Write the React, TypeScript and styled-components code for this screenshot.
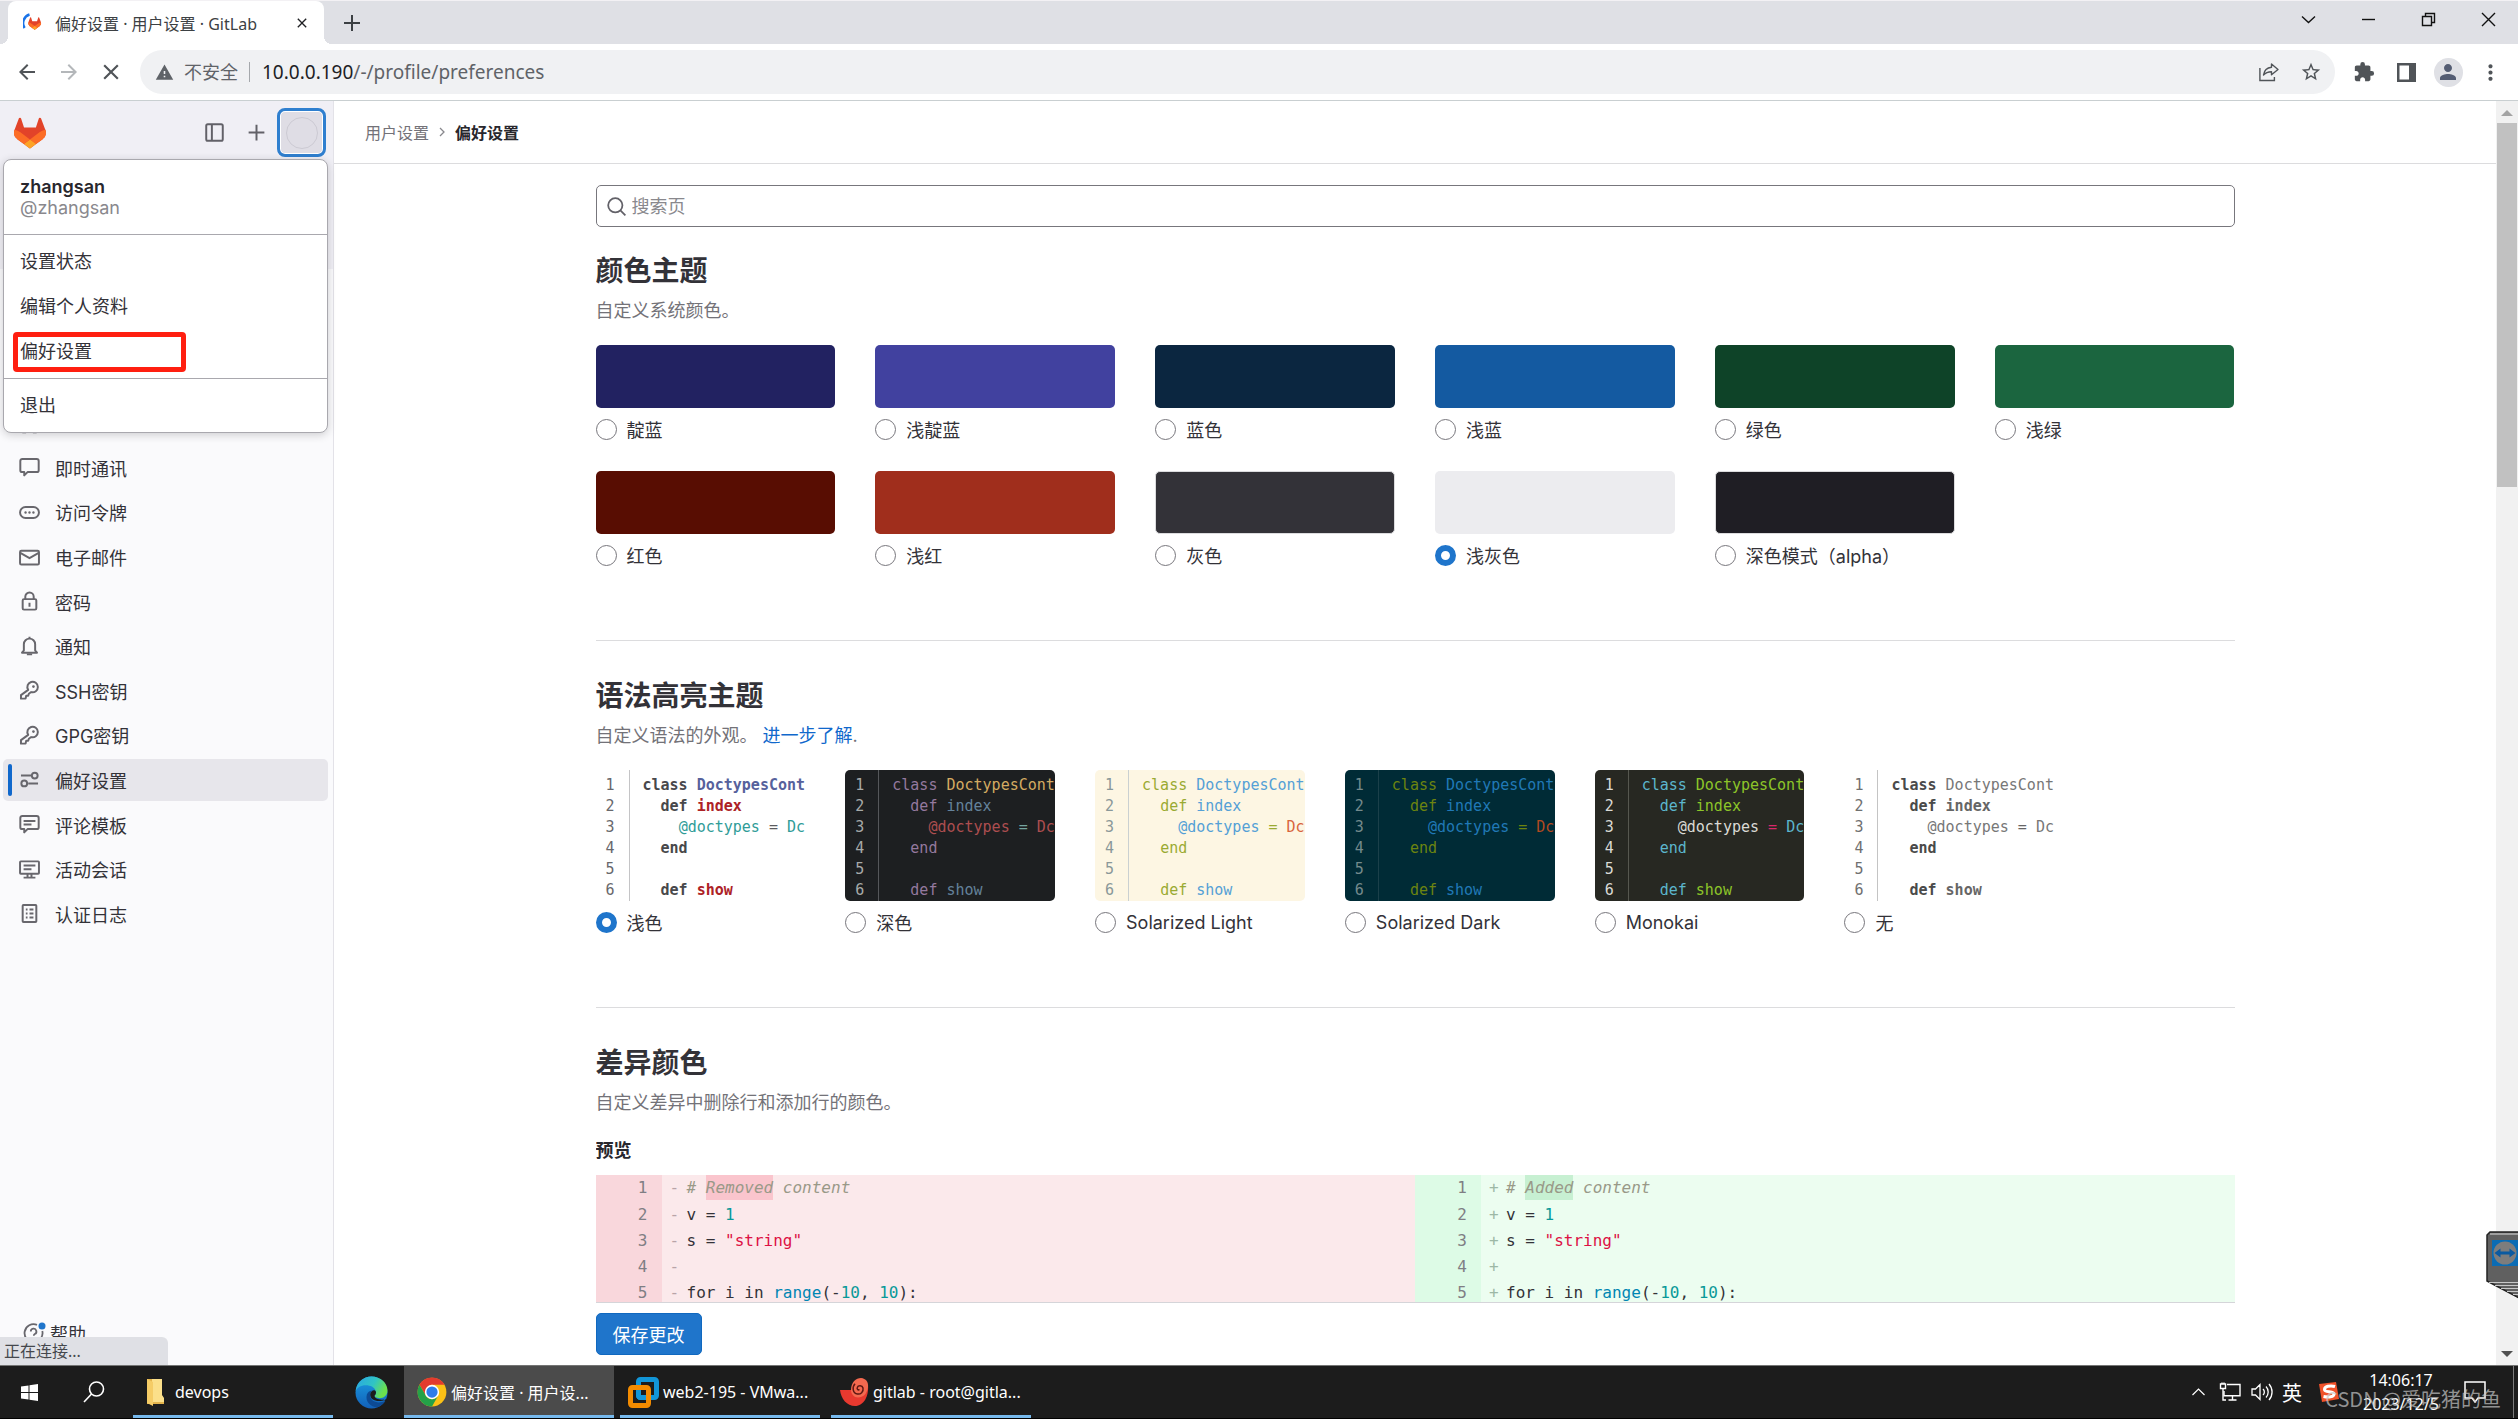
import React from "react";
import styled, { createGlobalStyle, css } from "styled-components";
import {
  MdArrowBack,
  MdArrowForward,
  MdClose,
  MdExtension,
  MdMoreVert,
  MdPerson,
  MdStarBorder,
  MdWarning,
} from "react-icons/md";

const uiFont = `"Noto Sans", "Noto Sans CJK SC", sans-serif`;
const pageFont = `Inter, "Noto Sans CJK SC", sans-serif`;
const codeFont = `"DejaVu Sans Mono", "Noto Sans CJK SC", monospace`;

const GlobalStyle = createGlobalStyle`
  *, *::before, *::after { box-sizing: border-box; }
  html, body { margin: 0; padding: 0; }
  body { background: #fff; font-family: ${pageFont}; color: #333238; overflow: hidden; }
  button { font: inherit; color: inherit; background: none; border: 0; padding: 0; }
  h1, h2, p, ul, ol { margin: 0; padding: 0; }
  ul, ol { list-style: none; }
  a { color: inherit; text-decoration: none; }
  svg { display: block; flex: none; }
`;

const Desktop = styled.div`
  height: 100vh;
  display: flex;
  flex-direction: column;
  position: relative;
`;

/* ---------- Browser frame ---------- */

const TabStrip = styled.header`
  display: flex;
  height: 44px;
  padding-left: 8px;
  background: #dfe0e5;
  border-top: 1px solid #f3f1f4;
  font-family: ${uiFont};
`;

const Tab = styled.div`
  position: relative;
  display: flex;
  align-items: center;
  width: 316px;
  padding: 0 14px 0 15px;
  background: #fff;
  border-radius: 8px 8px 0 0;
  font-size: 16px;
  color: #3c4043;
  &::before,
  &::after {
    content: "";
    position: absolute;
    bottom: 0;
    width: 8px;
    height: 8px;
  }
  &::before {
    left: -8px;
    background: radial-gradient(circle at 0 0, transparent 8px, #fff 8px);
  }
  &::after {
    right: -8px;
    background: radial-gradient(circle at 100% 0, transparent 8px, #fff 8px);
  }
`;

const TabTitle = styled.span`
  flex: 1;
  margin-left: 13px;
  white-space: nowrap;
`;

const StripButton = styled.button<{ $width: number }>`
  display: grid;
  place-items: center;
  width: ${(p) => p.$width}px;
  color: #202124;
`;

const WindowControls = styled.div`
  display: flex;
  margin-left: auto;
  height: 37px;
`;

const Toolbar = styled.div`
  display: flex;
  align-items: center;
  height: 57px;
  padding: 0 7px 0 6px;
  background: #fff;
  border-bottom: 1px solid #c9cfd1;
  font-family: ${uiFont};
`;

const ToolButton = styled.button<{ $muted?: boolean }>`
  display: grid;
  place-items: center;
  width: 42px;
  height: 42px;
  color: ${(p) => (p.$muted ? "#b4b7ba" : "#505458")};
`;

const Omnibox = styled.div`
  flex: 1;
  display: flex;
  align-items: center;
  height: 44px;
  margin: 0 8px;
  padding: 0 3px 0 15px;
  border-radius: 22px;
  background: #f0f1f3;
  color: #5f6368;
  font-size: 18px;
`;

const Security = styled.span`
  margin-left: 10px;
  padding-right: 11px;
  border-right: 1px solid #a5a8ac;
  line-height: 20px;
`;

const Address = styled.div`
  flex: 1;
  margin-left: 12px;
  font-size: 19px;
  b {
    font-weight: 400;
    color: #202124;
  }
`;

const ProfileChip = styled.span`
  display: grid;
  place-items: center;
  width: 29px;
  height: 29px;
  border-radius: 50%;
  background: #dfe0e5;
  color: #545d73;
`;

/* ---------- Page shell ---------- */

const Viewport = styled.div`
  flex: 1;
  min-height: 0;
  display: flex;
  position: relative;
`;

const Sidebar = styled.aside`
  position: relative;
  display: flex;
  flex-direction: column;
  width: 334px;
  background: #fafafc;
  border-right: 1px solid #e3e2e8;
`;

const SidebarTop = styled.div`
  display: flex;
  align-items: flex-start;
  height: 168px;
  padding: 7px 7px 0 14px;
  background: #f0eff5;
`;

const LogoLink = styled.a`
  margin: 9px auto 0 0;
`;

const TopButton = styled.button`
  display: grid;
  place-items: center;
  width: 42px;
  height: 49px;
  color: #626168;
`;

const AvatarButton = styled.button`
  display: grid;
  place-items: center;
  width: 49px;
  height: 49px;
  background: #dfdde5;
  border: 3px solid #2f7fcf;
  border-radius: 8px;
  box-shadow: inset 0 0 0 1px #fff;
`;

const AvatarRing = styled.span`
  width: 32px;
  height: 32px;
  border: 1px solid #cccad3;
  border-radius: 50%;
`;

const UserMenu = styled.div`
  position: absolute;
  z-index: 2;
  top: 58px;
  left: 3px;
  width: 325px;
  background: #fff;
  border: 1px solid #a9a8ae;
  border-radius: 8px;
  box-shadow: 0 2px 8px rgba(31, 30, 36, 0.2);
  font-size: 18px;
`;

const MenuUser = styled.div`
  padding: 16px 16px;
  line-height: 21px;
  span {
    display: block;
    color: #89888d;
  }
  strong {
    display: block;
    font-weight: 600;
    color: #28272d;
  }
`;

const MenuGroup = styled.ul`
  padding: 4px 8px;
  border-top: 1px solid #a9a8ae;
`;

const MenuLink = styled.a<{ $marked?: boolean }>`
  position: relative;
  display: block;
  padding: 0 8px;
  line-height: 45px;
  ${(p) =>
    p.$marked &&
    css`
      &::after {
        content: "";
        position: absolute;
        inset: 3px auto 2px 1px;
        width: 173px;
        border: 5px solid #ff1f10;
        border-radius: 4px;
      }
    `}
`;

const NavList = styled.ul`
  display: grid;
  grid-auto-rows: 1fr;
  min-height: 535px;
  margin-top: 132px;
  padding: 0 5px 0 3px;
`;

const NavItem = styled.li`
  display: flex;
  align-items: center;
`;

const NavLink = styled.a<{ $active?: boolean }>`
  position: relative;
  flex: 1;
  display: flex;
  align-items: center;
  gap: 15px;
  height: 42px;
  padding: 0 16px;
  border-radius: 5px;
  font-size: 18px;
  svg {
    color: #68676d;
  }
  ${(p) =>
    p.$active &&
    css`
      background: #e7e6eb;
      &::before {
        content: "";
        position: absolute;
        left: 5px;
        width: 4px;
        height: 32px;
        border-radius: 2px;
        background: #1068cc;
      }
    `}
`;

const HelpButton = styled.button`
  display: flex;
  align-items: center;
  gap: 4px;
  margin: auto 0 17px 23px;
  height: 30px;
  font-size: 18px;
  svg {
    color: #68676d;
  }
`;

const StatusBubble = styled.div`
  position: absolute;
  z-index: 2;
  left: 0;
  bottom: 0;
  width: 168px;
  padding-left: 4px;
  background: #dfe0e5;
  border-radius: 0 6px 0 0;
  font: 16px/28px ${uiFont};
  color: #45484d;
`;

const Main = styled.main`
  flex: 1;
  min-width: 0;
  display: flex;
  flex-direction: column;
`;

const Breadcrumbs = styled.ol`
  display: flex;
  align-items: center;
  gap: 10px;
  height: 63px;
  padding-left: 31px;
  border-bottom: 1px solid #dcdcde;
  font-size: 16px;
  color: #737278;
`;

const Crumb = styled.li<{ $current?: boolean }>`
  display: flex;
  align-items: center;
  ${(p) => p.$current && "font-weight: 600; color: #28272d;"}
`;

const Column = styled.div`
  width: calc(100% - 40px);
  max-width: 1639px;
  margin: 0 auto;
`;

const Content = styled(Column)`
  flex: 1;
  min-height: 0;
  overflow: hidden;
  padding-top: 21px;
`;

const SearchBox = styled.label`
  display: flex;
  align-items: center;
  gap: 6px;
  height: 42px;
  margin-bottom: 26px;
  padding: 0 10px;
  border: 1px solid #77767c;
  border-radius: 5px;
  color: #626168;
  input {
    flex: 1;
    height: 38px;
    padding: 0;
    border: 0;
    outline: 0;
    background: none;
    font: 18px ${pageFont};
  }
  input::placeholder {
    color: #89888d;
    opacity: 1;
  }
`;

const Section = styled.section`
  padding-bottom: 73px;
  & + & {
    padding-top: 37px;
    border-top: 1px solid #dcdcde;
  }
`;

const Heading = styled.h2`
  font-size: 28px;
  line-height: 36px;
  font-weight: 700;
`;

const Hint = styled.p`
  margin: 10px 0 22px;
  font-size: 18px;
  line-height: 24px;
  color: #737278;
  a {
    color: #1068cc;
  }
`;

const ThemeGrid = styled.div`
  display: grid;
  grid-template-columns: repeat(6, 1fr);
  gap: 30px 40px;
`;

const SyntaxGrid = styled(ThemeGrid)`
  width: 89%;
`;

const Option = styled.label`
  display: block;
  min-width: 0;
`;

const OptionRow = styled.span`
  display: flex;
  align-items: center;
  gap: 10px;
  height: 24px;
  margin-top: 9px;
  font-size: 18px;
  white-space: nowrap;
`;

const Radio = styled.input`
  appearance: none;
  flex: none;
  width: 21px;
  height: 21px;
  margin: 0;
  border: 1px solid #77767c;
  border-radius: 50%;
  background: #fff;
  &:checked {
    border: 6px solid #1f75cb;
  }
`;

const Swatch = styled.span<{ $color: string; $inset?: boolean }>`
  display: block;
  height: 63px;
  border-radius: 5px;
  background: ${(p) => p.$color};
  ${(p) => p.$inset && "border: 1px solid #dcdcde;"}
`;

const Preview = styled.span<{ $bg: string; $num: string; $rule: string }>`
  display: grid;
  grid-template-columns: 34px 1fr;
  height: 131px;
  overflow: hidden;
  border-radius: 5px;
  background: ${(p) => p.$bg};
  font: 15px/21px ${codeFont};
  white-space: pre;
  > span {
    padding-top: 5px;
  }
  > span:first-child {
    padding-left: 10px;
    color: ${(p) => p.$num};
    border-right: 1px solid ${(p) => p.$rule};
  }
  > span:last-child {
    padding-left: 13px;
    overflow: hidden;
  }
`;

const Tone = styled.span<{ $color: string; $bold?: boolean }>`
  color: ${(p) => p.$color};
  font-weight: ${(p) => (p.$bold ? 700 : 400)};
`;

const SubHeading = styled.p`
  margin: 24px 0 12px;
  font-size: 18px;
  line-height: 24px;
  font-weight: 600;
  color: #28272d;
`;

const DiffHint = styled(Hint)`
  margin-bottom: 0;
`;

const Diff = styled.div`
  display: grid;
  grid-template-columns: 1fr 1fr;
  font: 16px/26px ${codeFont};
  color: #333238;
`;

const DiffSide = styled.div<{ $added?: boolean }>`
  background: ${(p) => (p.$added ? "#ecfdf0" : "#fbe9eb")};
  --gutter: ${(p) => (p.$added ? "#ddfbe6" : "#f9d7dc")};
  --mark: ${(p) => (p.$added ? "#c7f0d2" : "#fac5cd")};
  --sign: ${(p) => (p.$added ? "#9db8a5" : "#b8a4a8")};
`;

const DiffLine = styled.div`
  display: grid;
  grid-template-columns: 66px 25px 1fr;
  height: 26px;
  white-space: pre;
  &:first-child {
    height: 27px;
  }
`;

const LineNumber = styled.span`
  padding-right: 14px;
  text-align: right;
  background: var(--gutter);
  color: #7f7e84;
`;

const Sign = styled.span`
  padding-left: 8px;
  color: var(--sign);
`;

const Comment = styled.i`
  color: #999988;
  mark {
    padding: 3px 0;
    color: inherit;
    background: var(--mark);
  }
`;

const SaveBar = styled(Column)`
  height: 63px;
  padding-top: 10px;
  border-top: 1px solid #d5d5d9;
`;

const SaveButton = styled.button`
  height: 42px;
  padding: 0 16px;
  border: 1px solid #1068bf;
  border-radius: 5px;
  background: #1f75cb;
  color: #fff;
  font-size: 18px;
`;

const ScrollTrack = styled.div`
  display: flex;
  flex-direction: column;
  align-items: center;
  width: 22px;
  background: #f1f1f1;
`;

const ScrollThumb = styled.div`
  width: 20px;
  height: 364px;
  margin-bottom: auto;
  background: #c1c1c1;
`;

const ScrollArrow = styled.svg`
  width: 22px;
  height: 22px;
`;

const RemoteHandle = styled.div`
  position: absolute;
  right: 0;
  bottom: 66px;
`;

/* ---------- Taskbar ---------- */

const Taskbar = styled.footer`
  display: flex;
  height: 54px;
  background: #1c1c1c;
  border-top: 1px solid #747574;
  border-bottom: 1px solid #000;
  font: 16px ${uiFont};
  color: #fff;
`;

const TaskButton = styled.button<{ $width: number }>`
  display: grid;
  place-items: center;
  width: ${(p) => p.$width}px;
`;

const Task = styled.button<{ $active?: boolean }>`
  position: relative;
  display: flex;
  align-items: center;
  gap: 4px;
  width: 210px;
  margin-right: 1px;
  padding-left: 13px;
  white-space: nowrap;
  background: ${(p) => (p.$active ? "#4b4b4b" : "transparent")};
  &::after {
    content: "";
    position: absolute;
    bottom: 0;
    left: ${(p) => (p.$active ? 0 : 5)}px;
    right: ${(p) => (p.$active ? 0 : 5)}px;
    height: 3px;
    background: #76b9ed;
  }
`;

const Tray = styled.div`
  display: flex;
  margin-left: auto;
`;

const Ime = styled.span`
  font-size: 20px;
`;

const Clock = styled.time`
  width: 98px;
  padding-top: 2px;
  text-align: center;
  line-height: 24px;
  span {
    display: block;
  }
`;

const ShowDesktop = styled.button`
  width: 5px;
  margin-left: 13px;
  border-left: 1px solid #7b7b7b;
`;

const Watermark = styled.div`
  position: absolute;
  right: 17px;
  bottom: 6px;
  font: 20px/28px "Noto Sans CJK SC", sans-serif;
  color: rgba(200, 200, 200, 0.7);
  white-space: nowrap;
`;

/* ---------- Drawings ---------- */

const Tanuki = ({ size }: { size: number }) => (
  <svg width={size} height={size} viewBox="0 0 25 24" aria-hidden="true">
    <path fill="#E24329" d="m24.507 9.5-.034-.09L21.082.562a.896.896 0 0 0-1.694.091l-2.29 7.01H7.825L5.535.653a.898.898 0 0 0-1.694-.09L.451 9.411.416 9.5a6.297 6.297 0 0 0 2.09 7.278l.012.01.03.022 5.16 3.867 2.56 1.935 1.554 1.176a1.051 1.051 0 0 0 1.268 0l1.555-1.176 2.56-1.935 5.197-3.89.014-.01A6.297 6.297 0 0 0 24.507 9.5Z" />
    <path fill="#FC6D26" d="m24.507 9.5-.034-.09a11.44 11.44 0 0 0-4.56 2.051l-7.447 5.632 4.742 3.584 5.197-3.89.014-.01A6.297 6.297 0 0 0 24.507 9.5Z" />
    <path fill="#FCA326" d="m7.707 20.677 2.56 1.935 1.555 1.176a1.051 1.051 0 0 0 1.268 0l1.555-1.176 2.56-1.935-4.743-3.584-4.755 3.584Z" />
    <path fill="#FC6D26" d="M5.01 11.461a11.43 11.43 0 0 0-4.56-2.05L.416 9.5a6.297 6.297 0 0 0 2.09 7.278l.012.01.03.022 5.16 3.867 4.745-3.584-7.444-5.632Z" />
  </svg>
);

const Favicon = () => (
  <svg width="19" height="19" viewBox="0 0 19 19" aria-hidden="true">
    <path d="M6.500 1.500A9 9 0 0 0 1.600 15" fill="none" stroke="#1a73e8" strokeWidth="2.4" />
    <g transform="translate(5.2 4.2) scale(.52)">
      <path fill="#E24329" d="m24.500 9.500L21 .6a.9.9 0 0 0-1.700 0l-2.300 7H7.800l-2.300-7a.9.9 0 0 0-1.700 0L.4 9.500a6.300 6.300 0 0 0 2.100 7.300l9.300 7a1 1 0 0 0 1.300 0l9.300-7a6.300 6.300 0 0 0 2.100-7.300Z" />
      <path fill="#FC6D26" d="M.4 9.500c1.700.4 3.200 1 4.600 2l7.500 5.600 7.500-5.600c1.400-1 2.900-1.600 4.500-2a6.300 6.300 0 0 1-2.100 7.300l-9.300 7a1 1 0 0 1-1.300 0l-9.300-7A6.300 6.300 0 0 1 .4 9.500Z" />
      <path fill="#FCA326" d="m7.700 20.700 4.100 3.100a1 1 0 0 0 1.300 0l4.100-3.100-4.700-3.600Z" />
    </g>
  </svg>
);

const Line = ({ children, size = 21 }: { children: React.ReactNode; size?: number }) => (
  <svg width={size} height={size} viewBox="0 0 16 16" fill="none" stroke="currentColor" strokeWidth="1.5" aria-hidden="true">
    {children}
  </svg>
);

const bubble = "M2.5 1.5h11a1.5 1.5 0 0 1 1.5 1.5v7a1.5 1.5 0 0 1-1.5 1.5h-7L4 14v-2.5H2.5A1.5 1.5 0 0 1 1 10V3a1.5 1.5 0 0 1 1.5-1.5Z";

const icons: Record<string, React.ReactNode> = {
  apps: (
    <>
      <circle cx="4" cy="4" r="2.2" /><circle cx="12" cy="4" r="2.2" />
      <circle cx="4" cy="12.5" r="2.2" /><circle cx="12" cy="12.5" r="2.2" />
    </>
  ),
  comment: <path strokeLinejoin="round" d={bubble} />,
  token: (
    <>
      <rect x=".8" y="3.8" width="14.4" height="8.4" rx="4.2" />
      <g fill="currentColor" stroke="none"><circle cx="5" cy="8" r=".9" /><circle cx="8" cy="8" r=".9" /><circle cx="11" cy="8" r=".9" /></g>
    </>
  ),
  mail: (
    <>
      <rect x=".8" y="2.8" width="14.4" height="10.6" rx="1" />
      <path d="m1 4.500 7 4 7-4" />
    </>
  ),
  lock: (
    <>
      <rect x="2.8" y="6.2" width="10.4" height="8" rx="1" />
      <path d="M4.8 6V4.400a3.200 3.200 0 0 1 6.400 0V6M8 9v3" />
    </>
  ),
  bell: (
    <>
      <path strokeLinejoin="round" d="M2.3 12.7h11.4L12.3 11V6.300a4.300 4.300 0 0 0-8.600 0V11Z" />
      <path d="M8 2V.5M6 14h4" />
    </>
  ),
  key: (
    <>
      <path strokeLinejoin="round" d="M7 7.500A4 4 0 1 1 9.300 9.200L7.500 10.500 7 12H5.500L5 14.200H1.500v-2.700Z" />
      <circle cx="11" cy="5" r="1" fill="currentColor" stroke="none" />
    </>
  ),
  preferences: (
    <>
      <path d="M1.500 5h8M7 11h7.500" />
      <circle cx="12" cy="5" r="2.2" /><circle cx="4" cy="11" r="2.2" />
    </>
  ),
  commentLines: (
    <>
      <path strokeLinejoin="round" d={bubble} />
      <path d="M3.500 5.300h9M3.500 8h6" />
    </>
  ),
  monitor: (
    <>
      <rect x=".8" y="1.8" width="14.4" height="9.4" rx=".6" />
      <path d="M3.500 5h9M3.500 7.800h6M6.500 11v3M9.500 11v3M3.500 14.200h9" />
    </>
  ),
  log: (
    <>
      <rect x="2.8" y="1.5" width="10.4" height="13" rx=".6" />
      <path d="M5.200 5h1.300M8 5h3M5.200 8h1.300M8 8h3M5.200 11h1.300M8 11h3" />
    </>
  ),
};

const WinIcon = ({ d }: { d: string }) => (
  <svg width="15" height="15" viewBox="0 0 15 15" fill="none" stroke="#111" strokeWidth="1.4" aria-hidden="true">
    <path d={d} />
  </svg>
);

const FolderIcon = () => (
  <svg width="30" height="30" viewBox="0 0 30 30" aria-hidden="true">
    <path fill="#e3b34c" d="M6 2h15v17l2 3v5H6Z" />
    <path fill="#fbdf8a" d="M11 2h10v16l2 3v4H11Z" />
    <path fill="#f5cc66" d="M6 2l6 3v24l-6-3Z" />
  </svg>
);

const EdgeIcon = () => (
  <svg width="33" height="33" viewBox="0 0 32 32" aria-hidden="true">
    <defs>
      <linearGradient id="edgeTop" x1="0" y1="0" x2="1" y2=".4">
        <stop offset="0" stopColor="#2aa5e5" /><stop offset=".6" stopColor="#30c4c4" /><stop offset="1" stopColor="#6be04d" />
      </linearGradient>
      <linearGradient id="edgeLow" x1="0" y1="0" x2="0" y2="1">
        <stop offset="0" stopColor="#1b9de2" /><stop offset="1" stopColor="#1260b8" />
      </linearGradient>
    </defs>
    <circle cx="16" cy="16" r="15.5" fill="url(#edgeLow)" />
    <path fill="url(#edgeTop)" d="M.6 15C1.200 6.500 8 .5 16 .5c9 0 15.500 6.500 15.500 13.500 0 5-4 7.500-7.500 7.500-3.500 0-5.500-1.500-5-2.500 1.500-1.500 1.500-3 1.200-4C19.500 11 15 9 10.500 9 5.500 9 1.500 11.500.6 15Z" />
    <path fill="#0d4a94" d="M11.500 18c-2 7 4 12.500 10.500 12.300 3.500-1.300 6-3.500 7.600-6.300-7 3.500-15 1-15.100-5.500 0-2 1-3.500 2-4.500-2.500.3-4.200 1.600-5 4Z" />
    <path fill="#1c1c1c" d="M19 19c1.500-1.500 1.500-3 1.200-4-.7-1.500-3-1.500-4.200 0-2 2-1.500 5.500 1 7.500 3 2 8 2.500 12.600.2.800-.4 1.200.2.800.9l-.8 1-2-1.800c-3.500.7-9.100-.8-8.600-3.800Z" />
  </svg>
);

const ChromeIcon = () => (
  <svg width="30" height="30" viewBox="0 0 48 48" aria-hidden="true">
    <circle cx="24" cy="24" r="23" fill="#fbc116" />
    <path fill="#e33b2e" d="M4 12.500A23 23 0 0 1 44 12.500H24A11.500 11.500 0 0 0 14 18Z" />
    <path fill="#e33b2e" d="M4 12.500 14 29.700 24 12.500Z" />
    <path fill="#24a148" d="M4 12.500A23 23 0 0 0 24 47l10-17.300A11.500 11.500 0 0 1 14 29.700Z" />
    <circle cx="24" cy="24" r="11.5" fill="#fff" />
    <circle cx="24" cy="24" r="9" fill="#2f7de9" />
  </svg>
);

const VmwareIcon = () => (
  <svg width="31" height="31" viewBox="0 0 31 31" fill="none" strokeWidth="5" aria-hidden="true">
    <rect x="10.5" y="2.5" width="18" height="18" rx="2" stroke="#1296d8" />
    <rect x="2.5" y="10.5" width="18" height="18" rx="2" stroke="#f38b00" />
    <path stroke="#1296d8" d="M10.500 13v5.500a2 2 0 0 0 2 2H18" />
  </svg>
);

const ShellIcon = () => (
  <svg width="30" height="30" viewBox="0 0 30 30" aria-hidden="true">
    <path fill="#e8392f" d="M1 13h12c-.5 5 3 7 7 5.500 4-2 5-6 4.500-10L29 8c1 11-4 21-13 21C8 29 2 22 1 13Z" />
    <path fill="#f4694f" d="M12 13C12 5 17 1 22 1c5 .5 7.500 4 7 9-1 7-5 10.500-10 10.500-4-.2-7-3-7-7.500Z" />
    <path fill="none" stroke="#5d1712" strokeWidth="1.5" d="M20.500 12.500c-1.500 1-2.800-.4-2.200-2 .8-2.500 5-2.500 5.700.5.800 4-2.500 6.500-5.500 6-5-.8-5.500-7-2.500-10.300" />
  </svg>
);

/* ---------- Data ---------- */

const navItems = [
  { icon: "apps", label: "应用" },
  { icon: "comment", label: "即时通讯" },
  { icon: "token", label: "访问令牌" },
  { icon: "mail", label: "电子邮件" },
  { icon: "lock", label: "密码" },
  { icon: "bell", label: "通知" },
  { icon: "key", label: "SSH密钥" },
  { icon: "key", label: "GPG密钥" },
  { icon: "preferences", label: "偏好设置", active: true },
  { icon: "commentLines", label: "评论模板" },
  { icon: "monitor", label: "活动会话" },
  { icon: "log", label: "认证日志" },
];

const themes = [
  { label: "靛蓝", color: "#222261" },
  { label: "浅靛蓝", color: "#41419f" },
  { label: "蓝色", color: "#0b2640" },
  { label: "浅蓝", color: "#145aa1" },
  { label: "绿色", color: "#0e4328" },
  { label: "浅绿", color: "#1b653f" },
  { label: "红色", color: "#580d02" },
  { label: "浅红", color: "#a02e1c" },
  { label: "灰色", color: "#333238", inset: true },
  { label: "浅灰色", color: "#ececef" },
  { label: "深色模式（alpha）", color: "#1f1e24", inset: true },
];

type Scheme = {
  label: string;
  bg: string;
  num: string;
  rule: string;
  keyword: string;
  klass: string;
  method: string;
  variable: string;
  operator: string;
  constant: string;
  boldKeyword?: boolean;
  boldClass?: boolean;
  boldMethod?: boolean;
};

const schemes: Scheme[] = [
  { label: "浅色", bg: "#fff", num: "#68686c", rule: "#c4c4c6", keyword: "#48484b", klass: "#56619c", method: "#ad2226", variable: "#2f9c98", operator: "#5c5c60", constant: "#2f9c98", boldKeyword: true, boldClass: true, boldMethod: true },
  { label: "深色", bg: "#1d1f21", num: "#a7aaa9", rule: "#55575a", keyword: "#94799e", klass: "#d4ab62", method: "#64829b", variable: "#ad4e50", operator: "#75a49f", constant: "#ad4e50" },
  { label: "Solarized Light", bg: "#fdf6e3", num: "#8a9899", rule: "#cad0d1", keyword: "#9aaa32", klass: "#54a0d6", method: "#54a0d6", variable: "#54a0d6", operator: "#9aaa32", constant: "#d8643c" },
  { label: "Solarized Dark", bg: "#002b36", num: "#748a8c", rule: "#1b404a", keyword: "#6c8410", klass: "#2079b7", method: "#2079b7", variable: "#2079b7", operator: "#6c8410", constant: "#b34a20" },
  { label: "Monokai", bg: "#272822", num: "#dadad5", rule: "#56574f", keyword: "#5cb6cd", klass: "#8dc529", method: "#8dc529", variable: "#dadad5", operator: "#d8286a", constant: "#5cb6cd" },
  { label: "无", bg: "#fff", num: "#707070", rule: "#c4c4c4", keyword: "#4a4a4a", klass: "#777", method: "#666", variable: "#777", operator: "#666", constant: "#777", boldKeyword: true, boldMethod: true },
];

const CodePreview = ({ s }: { s: Scheme }) => (
  <Preview $bg={s.bg} $num={s.num} $rule={s.rule}>
    <span>{"1\n2\n3\n4\n5\n6"}</span>
    <span>
      <Tone $color={s.keyword} $bold={s.boldKeyword}>class</Tone> <Tone $color={s.klass} $bold={s.boldClass}>DoctypesCont</Tone>
      {"\n  "}
      <Tone $color={s.keyword} $bold={s.boldKeyword}>def</Tone> <Tone $color={s.method} $bold={s.boldMethod}>index</Tone>
      {"\n    "}
      <Tone $color={s.variable}>@doctypes</Tone> <Tone $color={s.operator}>=</Tone> <Tone $color={s.constant}>Dc</Tone>
      {"\n  "}
      <Tone $color={s.keyword} $bold={s.boldKeyword}>end</Tone>
      {"\n\n  "}
      <Tone $color={s.keyword} $bold={s.boldKeyword}>def</Tone> <Tone $color={s.method} $bold={s.boldMethod}>show</Tone>
    </span>
  </Preview>
);

const DiffPane = ({ word, added }: { word: string; added?: boolean }) => {
  const lines: React.ReactNode[] = [
    <Comment># <mark>{word}</mark> content</Comment>,
    <>v = <Tone $color="#099999">1</Tone></>,
    <>s = <Tone $color="#dd1144">"string"</Tone></>,
    "",
    <>
      for i in <Tone $color="#0086b3">range</Tone>(-<Tone $color="#099999">10</Tone>, <Tone $color="#099999">10</Tone>):
    </>,
  ];
  return (
    <DiffSide $added={added}>
      {lines.map((line, i) => (
        <DiffLine key={i}>
          <LineNumber>{i + 1}</LineNumber>
          <Sign>{added ? "+" : "-"}</Sign>
          <span>{line}</span>
        </DiffLine>
      ))}
    </DiffSide>
  );
};

/* ---------- App ---------- */

export default function App() {
  return (
    <Desktop>
      <GlobalStyle />
      <TabStrip>
        <Tab>
          <Favicon />
          <TabTitle>偏好设置 · 用户设置 · GitLab</TabTitle>
          <button aria-label="关闭标签页"><MdClose size={16} color="#202124" /></button>
        </Tab>
        <StripButton $width={56} aria-label="新标签页">
          <svg width="16" height="16" viewBox="0 0 16 16" stroke="#3c4043" strokeWidth="2"><path d="M8 0v16M0 8h16" /></svg>
        </StripButton>
        <WindowControls>
          <StripButton $width={60} aria-label="搜索标签页"><WinIcon d="M1 4.500l6.500 6 6.500-6" /></StripButton>
          <StripButton $width={60} aria-label="最小化"><WinIcon d="M1 7.500h13" /></StripButton>
          <StripButton $width={60} aria-label="还原"><WinIcon d="M1.500 4.500h9v9h-9ZM4.500 4.500v-3h9v9h-3" /></StripButton>
          <StripButton $width={60} aria-label="关闭"><WinIcon d="M1 1l13 13M14 1 1 14" /></StripButton>
        </WindowControls>
      </TabStrip>

      <Toolbar>
        <ToolButton aria-label="后退"><MdArrowBack size={24} /></ToolButton>
        <ToolButton $muted aria-label="前进"><MdArrowForward size={24} /></ToolButton>
        <ToolButton aria-label="停止"><MdClose size={26} /></ToolButton>
        <Omnibox>
          <MdWarning size={19} />
          <Security>不安全</Security>
          <Address><b>10.0.0.190</b>/-/profile/preferences</Address>
          <ToolButton aria-label="分享">
            <svg width="20" height="20" viewBox="0 0 20 20" fill="none" stroke="currentColor" strokeWidth="1.4">
              <path d="M.9 6v12.500h14.500V15" />
              <path strokeLinejoin="round" d="M12.500 2 19 7.500l-6.500 5.300V9.700c-3.500 0-6 1-8 3.300.6-4 3.300-7.200 8-7.700Z" />
            </svg>
          </ToolButton>
          <ToolButton aria-label="收藏"><MdStarBorder size={22} /></ToolButton>
        </Omnibox>
        <ToolButton aria-label="扩展程序"><MdExtension size={22} /></ToolButton>
        <ToolButton aria-label="侧边栏">
          <svg width="19" height="19" viewBox="0 0 19 19"><path fill="currentColor" fillRule="evenodd" d="M0 0h19v19H0ZM2.500 2.500v14H12v-14Z" /></svg>
        </ToolButton>
        <ToolButton aria-label="个人资料"><ProfileChip><MdPerson size={24} /></ProfileChip></ToolButton>
        <ToolButton aria-label="菜单"><MdMoreVert size={25} /></ToolButton>
      </Toolbar>

      <Viewport>
        <Sidebar>
          <SidebarTop>
            <LogoLink href="#home" aria-label="主页"><Tanuki size={32} /></LogoLink>
            <TopButton aria-label="侧边栏">
              <Line>
                <rect x="1.7" y="1.7" width="12.6" height="12.6" rx="1.2" />
                <path d="M6 2v12" />
              </Line>
            </TopButton>
            <TopButton aria-label="新建"><Line><path d="M8 2v12M2 8h12" /></Line></TopButton>
            <AvatarButton aria-label="用户菜单"><AvatarRing /></AvatarButton>
          </SidebarTop>
          <UserMenu>
            <MenuUser><strong>zhangsan</strong><span>@zhangsan</span></MenuUser>
            <MenuGroup>
              <li><MenuLink href="#status">设置状态</MenuLink></li>
              <li><MenuLink href="#profile">编辑个人资料</MenuLink></li>
              <li><MenuLink href="#preferences" $marked>偏好设置</MenuLink></li>
            </MenuGroup>
            <MenuGroup>
              <li><MenuLink href="#signout">退出</MenuLink></li>
            </MenuGroup>
          </UserMenu>
          <nav>
            <NavList>
              {navItems.map((item) => (
                <NavItem key={item.label}>
                  <NavLink href="#nav" $active={item.active}>
                    <Line>{icons[item.icon]}</Line>
                    {item.label}
                  </NavLink>
                </NavItem>
              ))}
            </NavList>
          </nav>
          <HelpButton>
            <svg width="23" height="23" viewBox="0 0 23 23" fill="none" stroke="currentColor" strokeWidth="1.8">
              <path d="M14 2.800A9 9 0 1 0 19.300 9" />
              <path d="M7.800 9.500a2.800 2.800 0 1 1 4 2.500c-.8.400-1 .8-1 1.800M10.800 15.200v1.600" />
              <circle cx="19" cy="4" r="3.5" fill="#1f75cb" stroke="none" />
            </svg>
            帮助
          </HelpButton>
        </Sidebar>

        <Main>
          <Breadcrumbs>
            <Crumb><a href="#user">用户设置</a></Crumb>
            <Crumb aria-hidden="true">
              <svg width="6" height="10" viewBox="0 0 6 10" fill="none" stroke="#89888d" strokeWidth="1.3"><path d="m1 1 4 4-4 4" /></svg>
            </Crumb>
            <Crumb $current>偏好设置</Crumb>
          </Breadcrumbs>
          <Content>
            <SearchBox>
              <Line size={19}><circle cx="7" cy="7" r="6" /><path d="m11.500 11.500 4 4" /></Line>
              <input type="search" placeholder="搜索页" aria-label="搜索页" />
            </SearchBox>

            <Section>
              <Heading>颜色主题</Heading>
              <Hint>自定义系统颜色。</Hint>
              <ThemeGrid>
                {themes.map((t) => (
                  <Option key={t.label}>
                    <Swatch $color={t.color} $inset={t.inset} />
                    <OptionRow>
                      <Radio type="radio" name="theme" defaultChecked={t.label === "浅灰色"} />
                      {t.label}
                    </OptionRow>
                  </Option>
                ))}
              </ThemeGrid>
            </Section>

            <Section>
              <Heading>语法高亮主题</Heading>
              <Hint>自定义语法的外观。 <a href="#learn">进一步了解</a>.</Hint>
              <SyntaxGrid>
                {schemes.map((s) => (
                  <Option key={s.label}>
                    <CodePreview s={s} />
                    <OptionRow>
                      <Radio type="radio" name="syntax" defaultChecked={s.label === "浅色"} />
                      {s.label}
                    </OptionRow>
                  </Option>
                ))}
              </SyntaxGrid>
            </Section>

            <Section>
              <Heading>差异颜色</Heading>
              <DiffHint>自定义差异中删除行和添加行的颜色。</DiffHint>
              <SubHeading>预览</SubHeading>
              <Diff>
                <DiffPane word="Removed" />
                <DiffPane word="Added" added />
              </Diff>
            </Section>
          </Content>
          <SaveBar><SaveButton>保存更改</SaveButton></SaveBar>
        </Main>

        <ScrollTrack>
          <ScrollArrow viewBox="0 0 22 22"><path fill="#a3a3a3" d="M5 15h12l-6-6Z" /></ScrollArrow>
          <ScrollThumb />
          <ScrollArrow viewBox="0 0 22 22"><path fill="#505050" d="M5 8h12l-6 6Z" /></ScrollArrow>
        </ScrollTrack>

        <StatusBubble>正在连接...</StatusBubble>
        <RemoteHandle>
          <svg width="32" height="68" viewBox="0 0 32 68" aria-hidden="true">
            <path fill="#606060" stroke="#222" strokeWidth="1.5" d="M33 1H4L1 4v46l32 17Z" />
            <path stroke="#ddd" d="M4 3h28" />
            <path stroke="#c8c8c8" d="M3 51.500h29M9 54.500h23M15 57.500h17M21 60.500h11M27 63.500h5" />
            <path fill="#0b6cb4" d="M6 9h26v26H6Z" />
            <circle cx="19" cy="22" r="11.5" fill="#7d7d7d" />
            <path fill="#0b5aa0" d="m8.500 22 6-4.500v3h9v-3l6 4.500-6 4.500v-3h-9v3Z" />
          </svg>
        </RemoteHandle>
      </Viewport>

      <Taskbar>
        <TaskButton $width={59} aria-label="开始">
          <svg width="17" height="17" viewBox="0 0 17 17" fill="#fff"><path d="M0 2.500 7.500 1.400V8H0ZM8.500 1.200 17 0v8H8.500ZM0 9h7.500v6.600L0 14.500ZM8.500 9H17v8l-8.500-1.200Z" /></svg>
        </TaskButton>
        <TaskButton $width={69} aria-label="搜索">
          <svg width="22" height="22" viewBox="0 0 22 22" fill="none" stroke="#fff" strokeWidth="1.6"><circle cx="13.5" cy="8" r="7" /><path d="M8.500 13 1 21" /></svg>
        </TaskButton>
        <Task><FolderIcon />devops</Task>
        <TaskButton $width={65} aria-label="Edge"><EdgeIcon /></TaskButton>
        <Task $active><ChromeIcon />偏好设置 · 用户设...</Task>
        <Task><VmwareIcon />web2-195 - VMwa...</Task>
        <Task><ShellIcon />gitlab - root@gitla...</Task>
        <Tray>
          <TaskButton $width={32} aria-label="显示隐藏的图标">
            <svg width="13" height="8" viewBox="0 0 13 8" fill="none" stroke="#fff" strokeWidth="1.2"><path d="m.5 7 6-6 6 6" /></svg>
          </TaskButton>
          <TaskButton $width={32} aria-label="网络">
            <svg width="22" height="20" viewBox="0 0 22 20" fill="none" stroke="#fff" strokeWidth="1.4">
              <path d="M8 2.500h13v11.300H5V9M9.500 18h8M13.500 14v4" /><path d="M1.500 2h5v4.500h-5ZM3 2V.5M5 2V.5M4 6.500V18h3" />
            </svg>
          </TaskButton>
          <TaskButton $width={32} aria-label="音量">
            <svg width="22" height="20" viewBox="0 0 22 20" fill="none" stroke="#fff" strokeWidth="1.3">
              <path d="M1 7h3.500L9 2.500v15L4.500 13H1ZM12 7a4 4 0 0 1 0 6M15 4.500a8 8 0 0 1 0 11M18 2a12 12 0 0 1 0 16" />
            </svg>
          </TaskButton>
          <TaskButton $width={28}><Ime>英</Ime></TaskButton>
          <TaskButton $width={46} aria-label="输入法">
            <svg width="22" height="22" viewBox="0 0 22 22">
              <path fill="#f0522a" d="m1 3 17-2 3 17-17 3Z" />
              <path fill="none" stroke="#fff" strokeWidth="3" d="M17 5.500C12 4 6.500 5.500 6.500 8.500c0 3.500 9.500 1 9.500 4.500 0 3-5.500 3.500-10.500 2.500" />
            </svg>
          </TaskButton>
          <Clock><span>14:06:17</span><span>2023/12/5</span></Clock>
          <TaskButton $width={50} aria-label="通知">
            <svg width="22" height="22" viewBox="0 0 22 22" fill="none" stroke="#fff" strokeWidth="1.5"><path d="M1 1h20v16h-7l-3 4-3-4H1Z" /></svg>
          </TaskButton>
          <ShowDesktop aria-label="显示桌面" />
        </Tray>
      </Taskbar>
      <Watermark>CSDN @爱吃猪的鱼</Watermark>
    </Desktop>
  );
}
